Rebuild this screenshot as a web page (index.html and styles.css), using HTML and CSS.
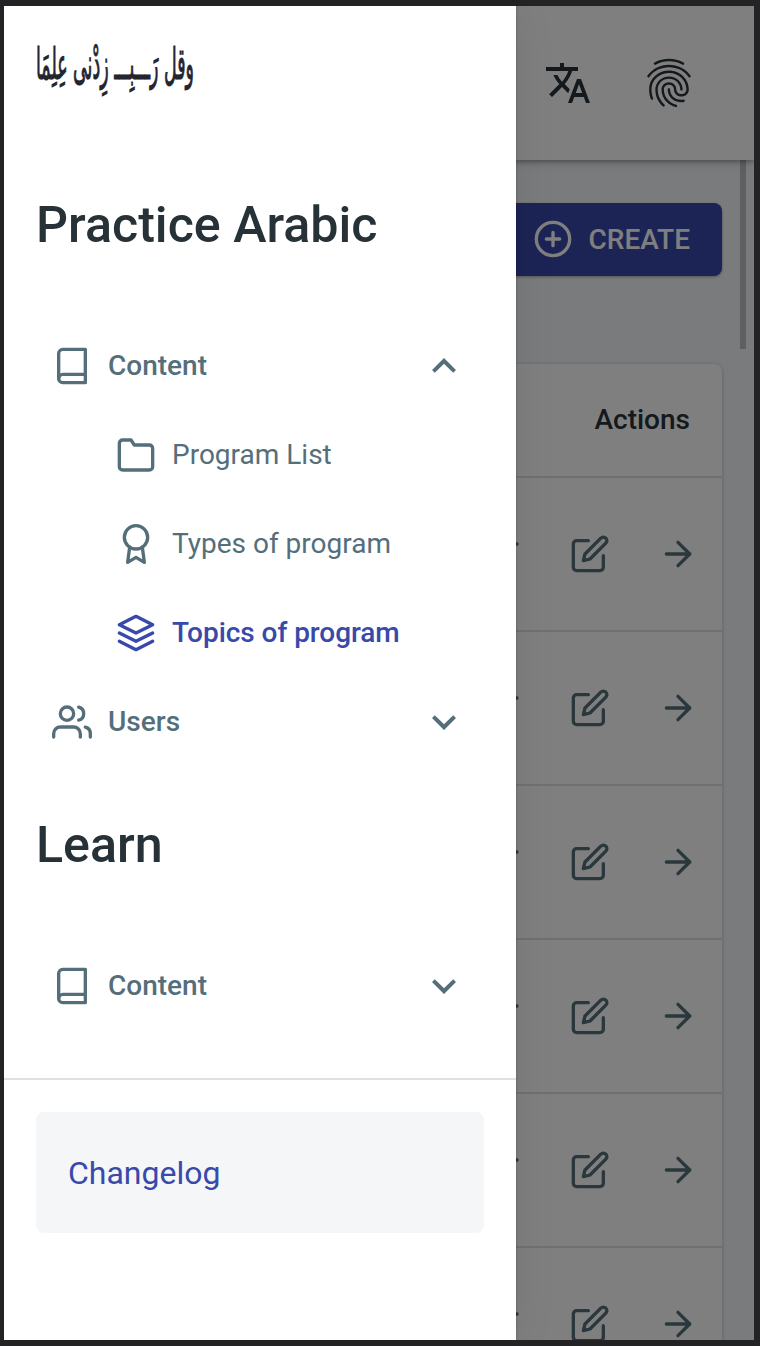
FILE: index.html
```html
<!DOCTYPE html>
<html lang="en">
<head>
<meta charset="utf-8">
<title>Practice Arabic</title>
<link rel="stylesheet" href="styles.css">
</head>
<body>
<svg class="sprite" aria-hidden="true">
  <symbol id="book" viewBox="0 0 24 24"><path d="M4 19.5A2.5 2.5 0 0 1 6.5 17H20"/><path d="M6.5 2H20v20H6.5A2.5 2.5 0 0 1 4 19.5v-15A2.5 2.5 0 0 1 6.5 2z"/></symbol>
  <symbol id="folder" viewBox="0 0 24 24"><path d="M22 19a2 2 0 0 1-2 2H4a2 2 0 0 1-2-2V5a2 2 0 0 1 2-2h5l2 3h9a2 2 0 0 1 2 2z"/></symbol>
  <symbol id="award" viewBox="0 0 24 24"><circle cx="12" cy="8" r="7"/><polyline points="8.21 13.89 7 23 12 20 17 23 15.79 13.88"/></symbol>
  <symbol id="layers" viewBox="0 0 24 24"><polygon points="12 2 2 7 12 12 22 7 12 2"/><polyline points="2 17 12 22 22 17"/><polyline points="2 12 12 17 22 12"/></symbol>
  <symbol id="users" viewBox="0 0 24 24"><path d="M17 21v-2a4 4 0 0 0-4-4H5a4 4 0 0 0-4 4v2"/><circle cx="9" cy="7" r="4"/><path d="M23 21v-2a4 4 0 0 0-3-3.87"/><path d="M16 3.13a4 4 0 0 1 0 7.75"/></symbol>
  <symbol id="plus" viewBox="0 0 24 24"><circle cx="12" cy="12" r="10"/><path d="M12 8v8M8 12h8"/></symbol>
  <symbol id="trash" viewBox="0 0 24 24"><path d="M3 6h18"/><path d="M19 6v14a2 2 0 0 1-2 2H7a2 2 0 0 1-2-2V6m3 0V4a2 2 0 0 1 2-2h4a2 2 0 0 1 2 2v2"/></symbol>
  <symbol id="edit" viewBox="0 0 24 24"><path d="M11 4H4a2 2 0 0 0-2 2v14a2 2 0 0 0 2 2h14a2 2 0 0 0 2-2v-7"/><path d="M18.5 2.5a2.121 2.121 0 0 1 3 3L12 15l-4 1 1-4 9.5-9.5z"/></symbol>
  <symbol id="arrow" viewBox="0 0 24 24"><path d="M5 12h14"/><polyline points="12 5 19 12 12 19"/></symbol>
  <symbol id="less" viewBox="0 0 24 24"><path d="M12 8l-6 6 1.41 1.41L12 10.83l4.59 4.58L18 14z"/></symbol>
  <symbol id="more" viewBox="0 0 24 24"><path d="M16.59 8.59L12 13.17 7.41 8.59 6 10l6 6 6-6z"/></symbol>
  <symbol id="translate" viewBox="0 0 24 24"><path d="M12.87 15.07l-2.54-2.51.03-.03c1.74-1.94 2.98-4.17 3.71-6.53H17V4h-7V2H8v2H1v1.99h11.17C11.5 7.92 10.44 9.75 9 11.35 8.07 10.32 7.3 9.19 6.69 8h-2c.73 1.63 1.73 3.17 2.98 4.56l-5.09 5.02L4 19l5-5 3.11 3.11.76-2.04zM18.5 10h-2L12 22h2l1.12-3h4.75L21 22h2l-4.5-12zm-2.62 7l1.62-4.33L19.12 17h-3.24z"/></symbol>
  <symbol id="fingerprint" viewBox="0 0 24 24"><path d="M17.81 4.47c-.08 0-.16-.02-.23-.06C15.66 3.42 14 3 12.01 3c-1.98 0-3.86.47-5.57 1.41-.24.13-.54.04-.68-.2-.13-.24-.04-.55.2-.68C7.82 2.52 9.86 2 12.01 2c2.13 0 3.99.47 6.03 1.52.25.13.34.43.21.67-.09.18-.26.28-.44.28zM3.5 9.72c-.1 0-.2-.03-.29-.09-.23-.16-.28-.47-.12-.7.99-1.4 2.25-2.5 3.75-3.27C9.98 4.04 14 4.03 17.15 5.65c1.5.77 2.76 1.86 3.75 3.25.16.22.11.54-.12.7-.23.16-.54.11-.7-.12-.9-1.26-2.04-2.25-3.39-2.94-2.87-1.47-6.54-1.47-9.4.01-1.36.7-2.5 1.7-3.4 2.96-.08.14-.23.21-.39.21zm6.25 12.07c-.13 0-.26-.05-.35-.15-.87-.87-1.34-1.43-2.01-2.64-.69-1.23-1.05-2.73-1.05-4.34 0-2.97 2.54-5.39 5.66-5.39s5.66 2.42 5.66 5.39c0 .28-.22.5-.5.5s-.5-.22-.5-.5c0-2.42-2.09-4.39-4.66-4.39-2.57 0-4.66 1.97-4.66 4.39 0 1.44.32 2.77.93 3.85.64 1.15 1.08 1.64 1.85 2.42.19.2.19.51 0 .71-.11.1-.24.15-.37.15zm7.17-1.85c-1.19 0-2.24-.3-3.1-.89-1.49-1.01-2.38-2.65-2.38-4.39 0-.28.22-.5.5-.5s.5.22.5.5c0 1.41.72 2.74 1.94 3.56.71.48 1.54.71 2.54.71.24 0 .64-.03 1.04-.1.27-.05.53.13.58.41.05.27-.13.53-.41.58-.57.11-1.07.12-1.21.12zM14.91 22c-.04 0-.09-.01-.13-.02-1.59-.44-2.63-1.03-3.72-2.1-1.4-1.39-2.17-3.24-2.17-5.22 0-1.62 1.38-2.94 3.08-2.94 1.7 0 3.08 1.32 3.08 2.94 0 1.07.93 1.94 2.08 1.94s2.08-.87 2.08-1.94c0-3.77-3.25-6.83-7.25-6.83-2.84 0-5.44 1.58-6.61 4.03-.39.81-.59 1.76-.59 2.8 0 .78.07 2.01.67 3.61.1.26-.03.55-.29.64-.26.1-.55-.04-.64-.29-.49-1.31-.73-2.61-.73-3.96 0-1.2.23-2.29.68-3.24 1.33-2.79 4.28-4.6 7.51-4.6 4.55 0 8.25 3.51 8.25 7.83 0 1.62-1.38 2.94-3.08 2.94s-3.08-1.32-3.08-2.94c0-1.07-.93-1.94-2.08-1.94s-2.08.87-2.08 1.94c0 1.71.66 3.31 1.87 4.51.95.94 1.86 1.46 3.27 1.85.27.07.42.35.35.61-.05.23-.26.38-.47.38z"/></symbol>
</svg>
<div class="screen">
  <div class="page">
    <header class="topbar">
      <svg class="solid"><use href="#translate"/></svg>
      <svg class="solid finger"><use href="#fingerprint"/></svg>
    </header>
    <main class="main">
      <div class="toolbar"><button class="create"><svg class="icon"><use href="#plus"/></svg>CREATE</button></div>
      <section class="card">
        <div class="head">Actions</div>
        <div class="row"><svg class="icon"><use href="#trash"/></svg><svg class="icon"><use href="#edit"/></svg><svg class="icon"><use href="#arrow"/></svg></div>
        <div class="row"><svg class="icon"><use href="#trash"/></svg><svg class="icon"><use href="#edit"/></svg><svg class="icon"><use href="#arrow"/></svg></div>
        <div class="row"><svg class="icon"><use href="#trash"/></svg><svg class="icon"><use href="#edit"/></svg><svg class="icon"><use href="#arrow"/></svg></div>
        <div class="row"><svg class="icon"><use href="#trash"/></svg><svg class="icon"><use href="#edit"/></svg><svg class="icon"><use href="#arrow"/></svg></div>
        <div class="row"><svg class="icon"><use href="#trash"/></svg><svg class="icon"><use href="#edit"/></svg><svg class="icon"><use href="#arrow"/></svg></div>
        <div class="row"><svg class="icon"><use href="#trash"/></svg><svg class="icon"><use href="#edit"/></svg><svg class="icon"><use href="#arrow"/></svg></div>
      </section>
      <div class="scrollbar"></div>
    </main>
  </div>
  <div class="backdrop"></div>
  <aside class="drawer">
    <svg class="logo" viewBox="0 0 160 60" lang="ar">
      <text transform="translate(0 41) scale(1 1.9)" x="0" y="0" font-size="23" textLength="158" lengthAdjust="spacingAndGlyphs">وقل رَـــبِـــ زِدْنی عِلِمَا</text>
    </svg>
    <h2 class="title">Practice Arabic</h2>
    <nav class="nav">
      <a class="item"><svg class="icon"><use href="#book"/></svg><span>Content</span><svg class="solid"><use href="#less"/></svg></a>
      <a class="item sub"><svg class="icon"><use href="#folder"/></svg><span>Program List</span></a>
      <a class="item sub"><svg class="icon"><use href="#award"/></svg><span>Types of program</span></a>
      <a class="item sub active"><svg class="icon"><use href="#layers"/></svg><span>Topics of program</span></a>
      <a class="item"><svg class="icon"><use href="#users"/></svg><span>Users</span><svg class="solid"><use href="#more"/></svg></a>
    </nav>
    <h2 class="title second">Learn</h2>
    <nav class="nav">
      <a class="item"><svg class="icon"><use href="#book"/></svg><span>Content</span><svg class="solid"><use href="#more"/></svg></a>
    </nav>
    <div class="footer"><a class="changelog">Changelog</a></div>
  </aside>
</div>
</body>
</html>
```
FILE: styles.css
```css
* { box-sizing: border-box; }
body {
  margin: 0;
  height: 1346px;
  padding: 6px 6px 6px 4px;
  background: #232325;
  font-family: Roboto, "Liberation Sans", sans-serif;
  color: #263238;
  overflow: hidden;
}
.sprite { display: none; }
.screen { position: relative; height: 1334px; overflow: hidden; }
.icon {
  width: 40px; height: 40px; flex: none;
  fill: none; stroke: currentColor; stroke-width: 2;
  stroke-linecap: round; stroke-linejoin: round;
}
.solid { width: 48px; height: 48px; flex: none; fill: currentColor; }

.page { isolation: isolate; height: 1334px; background: #f4f6f8; }
.topbar {
  position: relative;
  z-index: 1;
  height: 154px;
  padding-right: 56px;
  display: flex; align-items: center; justify-content: flex-end;
  gap: 48px;
  background: #fff;
  box-shadow: 0 2px 4px rgba(0,0,0,.25), 0 2px 10px rgba(0,0,0,.16);
}
.finger { width: 58px; height: 58px; }
.main { position: relative; padding: 43px 32px 0; }
.toolbar { display: flex; justify-content: flex-end; }
.create {
  display: flex; align-items: center; gap: 16px;
  height: 73px; padding: 0 32px 1px;
  border: 0; border-radius: 8px;
  background: #3949ab; color: #fff;
  font: 500 28px Roboto, sans-serif;
  box-shadow: 0 1px 3px rgba(0,0,0,.2), 0 1px 3px rgba(0,0,0,.14);
}
.card {
  margin-top: 88px;
  height: 1100px;
  background: #fff;
  border-radius: 8px;
  box-shadow: 0 0 0 2px rgba(63,63,68,.05), 0 2px 4px rgba(63,63,68,.15);
}
.head {
  height: 114px; padding: 0 32px 2px 0;
  display: flex; align-items: center; justify-content: flex-end;
  border-bottom: 2px solid #e0e0e0;
  font-size: 28px; font-weight: 500;
}
.row {
  height: 154px; padding-right: 24px;
  display: flex; align-items: center; justify-content: flex-end; gap: 48px;
  border-bottom: 2px solid #e0e0e0;
  color: #546e7a;
}
.scrollbar {
  position: absolute; right: 8px; top: 0;
  width: 6px; height: 189px;
  background: #bebfbe;
}
.backdrop { position: absolute; inset: 0; background: rgba(0,0,0,.5); }

.drawer {
  position: absolute; left: 0; top: 0;
  width: 512px; height: 1334px;
  background: #fff;
  box-shadow: 0 0 3px rgba(0,0,0,.2), 0 0 40px rgba(0,0,0,.08);
}
.logo {
  display: block;
  width: 160px; height: 60px;
  margin: 32px 0 0 32px;
  fill: #22242f;
  stroke: #22242f;
  stroke-width: .6;
  font-family: "DejaVu Sans", sans-serif;
  overflow: visible;
}
.title {
  margin: 99px 32px 0;
  font-size: 50.2px; line-height: 56px; font-weight: 500;
}
.nav { padding: 68px 32px 0; }
.item {
  display: flex; align-items: center; gap: 16px;
  height: 89px; padding: 0 16px;
  font-size: 28px; font-weight: 500;
  color: #546e7a;
}
.item span { flex: 1; }
.sub { padding-left: 80px; font-weight: 400; }
.active { color: #3949ab; font-weight: 500; letter-spacing: -.05px; }
.second { margin-top: 51px; }
.footer {
  margin-top: 48px;
  padding: 32px;
  border-top: 2px solid #e0e0e0;
}
.changelog {
  display: flex; align-items: center;
  height: 121px; padding: 0 32px;
  border-radius: 8px;
  background: #f4f6f8;
  color: #3949ab;
  font-size: 32px;
}
```
